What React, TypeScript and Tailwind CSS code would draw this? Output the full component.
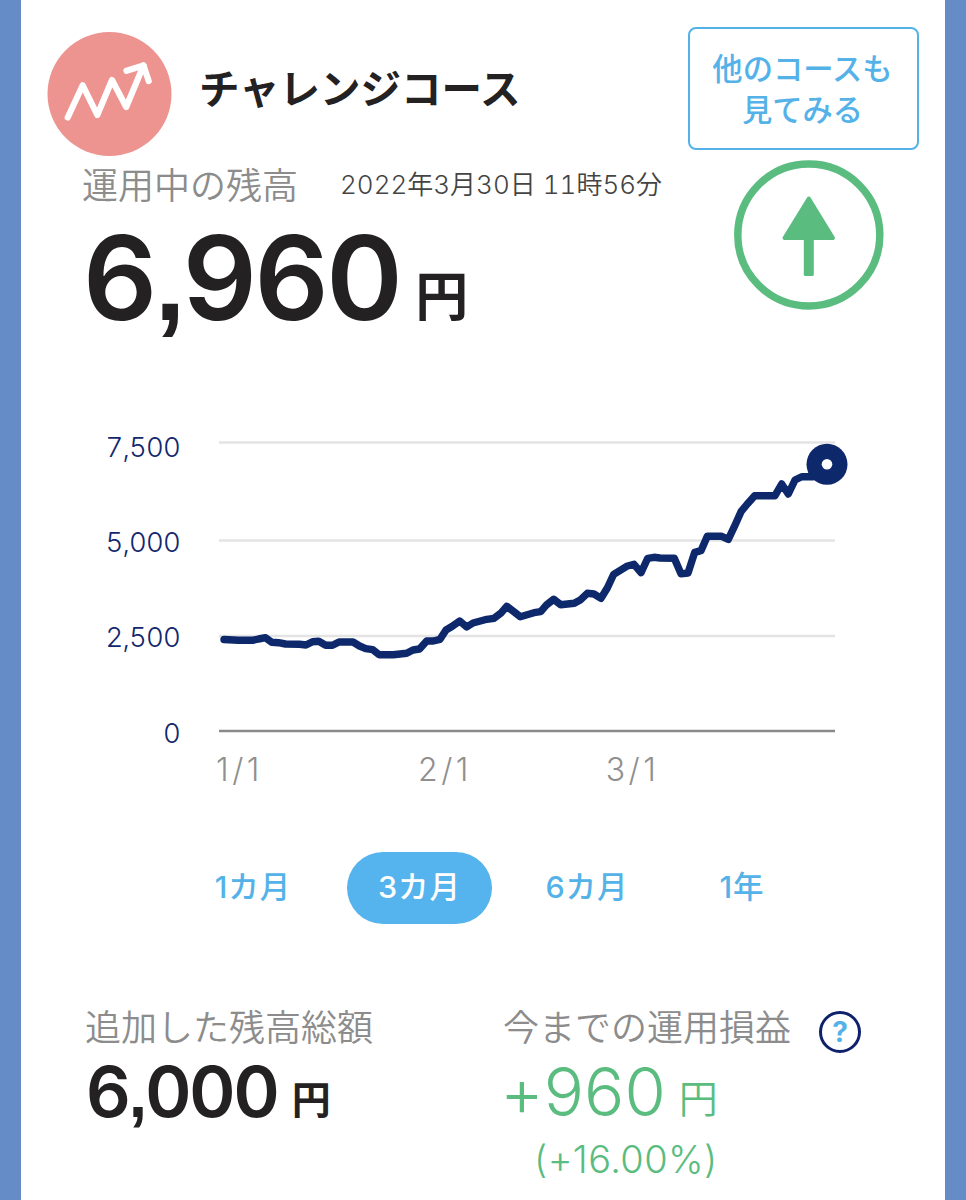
import { useState } from "react";

const periods = [
  { id: "1m", num: "1", unit: "カ月", width: "w-[144px]" },
  { id: "3m", num: "3", unit: "カ月", width: "w-[145px]" },
  { id: "6m", num: "6", unit: "カ月", width: "w-[146px]" },
  { id: "1y", num: "1", unit: "年", width: "w-[120px]" },
];

const yAxis = [
  { label: "7,500", y: 42.5, text: 57 },
  { label: "5,000", y: 140.5, text: 152 },
  { label: "2,500", y: 236, text: 247 },
  { label: "0", y: 331, text: 343 },
];

const xAxis = [
  { label: "1/1", x: 239.5 },
  { label: "2/1", x: 445 },
  { label: "3/1", x: 632.5 },
];

const line =
  "224,239.5 238.5,240.3 252.5,240.3 258.5,239 265.5,237.7 271.7,242.3 278.5,242.7 285.5,244 299.5,244.3 306,245 " +
  "312.5,241.7 318.7,241.3 325.7,245.3 332.5,245.3 339,242 353,242 359.5,246 365.7,248.7 372.7,249.7 379,254.7 " +
  "393.3,254.7 406.7,253.3 413,250 419.5,249 426.7,241 433.3,241 440,239.3 446,230 452.3,226.3 459.7,221 466.7,227 " +
  "473,223 485,219.7 494,218.3 500.7,213.3 506.7,206.3 513.3,211.3 520.3,216.7 534,212.7 540.7,211.7 546.7,204.7 " +
  "553.7,199.3 560.7,204.7 574.3,203.3 580.7,199.7 587.3,193.3 594,194 601,198.3 607.3,188 613.7,174.3 626.7,166.3 " +
  "634,164.3 641,172.7 647.7,158.3 654,157.3 660,158 674.3,158.3 681,173.7 688,173 694.7,152.3 701,150.7 707.3,136.3 " +
  "721.7,136.3 728.3,139.3 734.3,126.7 741,111.7 747.3,104 754.7,95.7 775,95.7 781.7,84 788.3,94 795,80 801.7,76.7 " +
  "813,76.7 827,64";

function CourseIcon() {
  return (
    <svg width="124" height="124" viewBox="0 0 124 124" className="shrink-0 overflow-visible">
      <circle cx="61.5" cy="62" r="62" fill="#ed9390" />
      <g fill="none" stroke="#fff" strokeWidth="6.2" strokeLinecap="round" strokeLinejoin="round">
        <path d="M19.7 85.5 34.7 53.3 49.3 83 64 48 78.2 75 95.5 33.5" />
        <path d="M78.5 38.8 95.5 33.5 100.7 49" />
      </g>
    </svg>
  );
}

function TrendUp() {
  return (
    <svg width="150" height="150" viewBox="0 0 150 150">
      <circle cx="74.8" cy="75" r="71" fill="none" stroke="#5bbc80" strokeWidth="7.5" />
      <path
        d="M74.8 38.5 99 78H50.5Z"
        fill="#5bbc80"
        stroke="#5bbc80"
        strokeWidth="4"
        strokeLinejoin="round"
      />
      <rect x="69.8" y="74" width="10" height="42" rx="1.5" fill="#5bbc80" />
    </svg>
  );
}

function Chart() {
  return (
    <svg width="924" height="400" viewBox="21 0 924 400">
      {yAxis.map((tick) => (
        <g key={tick.label}>
          <line
            x1="219"
            x2="835"
            y1={tick.y}
            y2={tick.y}
            stroke={tick.label === "0" ? "#8a8a8a" : "#e4e4e4"}
            strokeWidth="2.5"
          />
          <text
            x="180"
            y={tick.text}
            textAnchor="end"
            fill="#12276d"
            className="text-[27.5px] font-[350] tracking-[-0.8px] tabular-nums"
          >
            {tick.label}
          </text>
        </g>
      ))}
      {xAxis.map((tick) => (
        <text
          key={tick.label}
          x={tick.x}
          y="381"
          textAnchor="middle"
          fill="#8f8f8f"
          className="text-[32px] font-light tracking-[3.5px]"
        >
          {tick.label}
        </text>
      ))}
      <polyline
        points={line}
        fill="none"
        stroke="#0d286b"
        strokeWidth="7.4"
        strokeLinecap="round"
        strokeLinejoin="round"
      />
      <circle cx="827" cy="64.3" r="20.5" fill="#0d286b" />
      <circle cx="827" cy="64.3" r="5.3" fill="#fff" />
    </svg>
  );
}

export default function App() {
  const [period, setPeriod] = useState("3m");

  return (
    <div className="w-[966px] h-[1200px] overflow-hidden bg-[#668cc8] px-[21px] font-['Inter','Noto_Sans_CJK_JP',sans-serif] [font-feature-settings:'calt'_0]">
      <main className="flex h-full flex-col bg-white">
        {/* Course and balance */}
        <section className="flex h-[400px] justify-between pl-[27px] pr-[26px]">
          <div className="flex flex-col pt-8">
            <div className="flex h-[124px] items-center gap-[27px]">
              <CourseIcon />
              <h1 className="mb-[13px] font-['Noto_Sans_CJK_JP',sans-serif] text-[40.5px] leading-none font-bold text-[#232122]">
                チャレンジコース
              </h1>
            </div>
            <div className="flex h-[56px] items-center pl-[34px]">
              <span className="mb-[3px] font-['Noto_Sans_CJK_JP',sans-serif] text-[36px] leading-none font-[350] text-[#8c8c8c]">
                運用中の残高
              </span>
              <span className="mt-[2px] ml-[42px] text-[26px] leading-none font-[350] whitespace-nowrap tabular-nums text-[#444]">
                2022年3月30日 11時56分
              </span>
            </div>
            <div className="flex h-[132px] items-baseline pl-[35px] text-[#232122]">
              <span className="text-[116px] leading-[132px] font-[560] tracking-[-2.5px]">
                6<span className="font-['Liberation_Sans',sans-serif] text-[110px] font-bold">,</span>960
              </span>
              <span className="ml-[15px] -translate-y-1 text-[53px] font-bold">円</span>
            </div>
          </div>

          <div className="flex flex-col items-end pt-[27px]">
            <button className="h-[123px] w-[231px] rounded-[8px] border-[2.5px] border-[#55b2e8] pr-[2px] pb-[1px] font-['Noto_Sans_CJK_JP',sans-serif] text-[30.3px] leading-[41px] font-medium text-[#55b2e8]">
              他のコースも
              <br />
              見てみる
            </button>
            <div className="mt-[10px] mr-[35px]">
              <TrendUp />
            </div>
          </div>
        </section>

        <Chart />

        {/* Period */}
        <nav className="mt-[52px] flex h-[72px] gap-[22px] pl-[160px]">
          {periods.map((p) => (
            <button
              key={p.id}
              onClick={() => setPeriod(p.id)}
              className={`${p.width} h-[72px] rounded-full pb-[1px] text-[30.5px] leading-none font-medium tracking-[1px] ${
                period === p.id ? "bg-[#55b4ed] text-white" : "text-[#55b2e8]"
              }`}
            >
              {p.num}
              {p.unit}
            </button>
          ))}
        </nav>

        {/* Totals */}
        <section className="mt-[78px] flex pl-[64px]">
          <div className="w-[418px]">
            <div className="flex h-[50px] items-center pb-[4px] font-['Noto_Sans_CJK_JP',sans-serif] text-[36px] leading-none font-[350] text-[#8c8c8c]">
              追加した残高総額
            </div>
            <div className="flex h-[80px] items-baseline pl-[1px] text-[#232122]">
              <span className="text-[70px] leading-[80px] font-[560] tracking-[-2px]">
                6<span className="font-['Liberation_Sans',sans-serif] text-[66px] font-bold">,</span>000
              </span>
              <span className="ml-[14px] -translate-y-[3px] text-[39px] font-bold">円</span>
            </div>
          </div>
          <div>
            <div className="flex h-[50px] items-center">
              <span className="mb-[4px] font-['Noto_Sans_CJK_JP',sans-serif] text-[36px] leading-none font-[350] text-[#8c8c8c]">
                今までの運用損益
              </span>
              <button className="mt-[10px] ml-[28px] flex h-[42px] w-[42px] items-center justify-center rounded-full border-[3px] border-[#10216b] text-[28px] leading-none font-bold text-[#55b2e8]">
                ?
              </button>
            </div>
            <div className="flex h-[80px] items-baseline text-[#5bbc80]">
              <span className="-ml-[3px] text-[67px] leading-[80px] font-[350]">+960</span>
              <span className="ml-[13px] -translate-y-[3px] text-[39px] font-[350]">円</span>
            </div>
            <div className="mt-[7px] pl-[31px] text-[38px] leading-[40px] font-light tracking-[0.4px] text-[#5bbc80]">
              (+16.00%)
            </div>
          </div>
        </section>
      </main>
    </div>
  );
}
